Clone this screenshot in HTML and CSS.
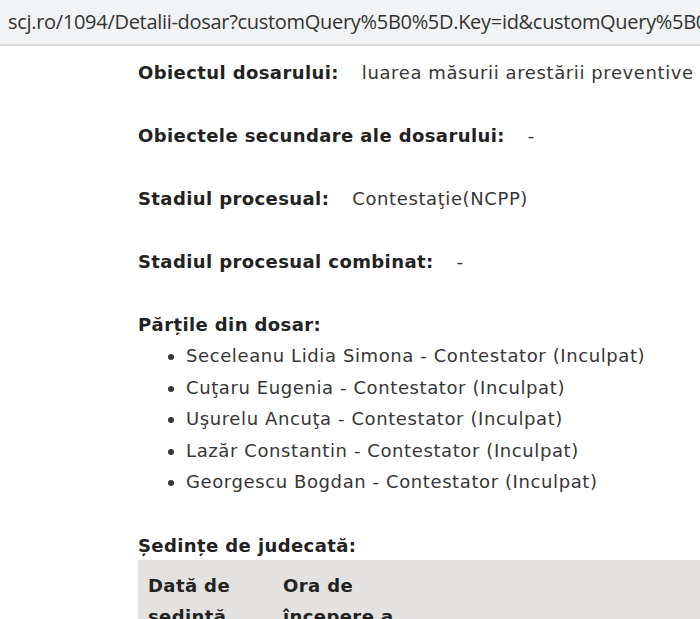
FILE: index.html
```html
<!DOCTYPE html>
<html>
<head>
<meta charset="utf-8">
<link rel="stylesheet" href="styles.css">
</head>
<body>
<div class="urlbar">scj.ro/1094/Detalii-dosar?customQuery%5B0%5D.Key=id&amp;customQuery%5B0%5D.Value=123456</div>
<main class="content">
  <p class="field"><b class="label">Obiectul dosarului:</b><span class="value">luarea măsurii arestării preventive (art. 223 NCPP)</span></p>
  <p class="field"><b class="label">Obiectele secundare ale dosarului:</b><span class="value">-</span></p>
  <p class="field"><b class="label">Stadiul procesual:</b><span class="value">Contestaţie(NCPP)</span></p>
  <p class="field"><b class="label">Stadiul procesual combinat:</b><span class="value">-</span></p>
  <div class="parties">
    <b class="label">Părțile din dosar:</b>
    <ul class="list">
      <li>Seceleanu Lidia Simona - Contestator (Inculpat)</li>
      <li>Cuţaru Eugenia - Contestator (Inculpat)</li>
      <li>Uşurelu Ancuţa - Contestator (Inculpat)</li>
      <li>Lazăr Constantin - Contestator (Inculpat)</li>
      <li>Georgescu Bogdan - Contestator (Inculpat)</li>
    </ul>
  </div>
  <div class="sessions">
    <b class="label">Ședințe de judecată:</b>
    <table class="table">
      <thead>
        <tr><th class="c1">Dată de<br>ședință</th><th class="c2">Ora de<br>începere a<br>ședinței</th><th class="c3">Complet</th></tr>
      </thead>
    </table>
  </div>
</main>
</body>
</html>
```
FILE: styles.css
```css
html, body { margin: 0; padding: 0; background: #fff; overflow: hidden; }
body { font-family: "DejaVu Sans", Verdana, sans-serif; color: #222; }
.urlbar {
  height: 44px;
  background: #f1f3f4;
  border-bottom: 2px solid #dcdcdc;
  font-family: "Open Sans", "Liberation Sans", sans-serif;
  font-size: 20px;
  line-height: 44px;
  color: #333;
  padding-left: 8px;
  white-space: nowrap;
  overflow: hidden;
  letter-spacing: -0.3px;
}
.content { padding-left: 138px; padding-top: 15px; white-space: nowrap; overflow: hidden; }
.field { margin: 0 0 40px 0; font-size: 18px; line-height: 23px; letter-spacing: 0.6px; }
.label { font-weight: bold; color: #222; letter-spacing: 0.4px; }
.value { color: #363636; margin-left: 23px; }
.parties { font-size: 18px; line-height: 23px; letter-spacing: 0.6px; }
.parties .label { letter-spacing: 0.4px; }
.list { margin: 4px 0 0 0; padding-left: 48px; color: #363636; }
.list li { line-height: 31.6px; }
.sessions { margin-top: 36px; font-size: 18px; line-height: 23px; }
.sessions .label { letter-spacing: 0.4px; }
.table { margin-top: 3px; border-collapse: collapse; width: 800px; background: #e4e2e0; }
.table th { text-align: left; vertical-align: top; font-weight: bold; padding: 10px 10px 8px; line-height: 31px; white-space: nowrap; color: #222; letter-spacing: 0.4px; }
.c1 { width: 115px; }
.c2 { width: 440px; }
```
